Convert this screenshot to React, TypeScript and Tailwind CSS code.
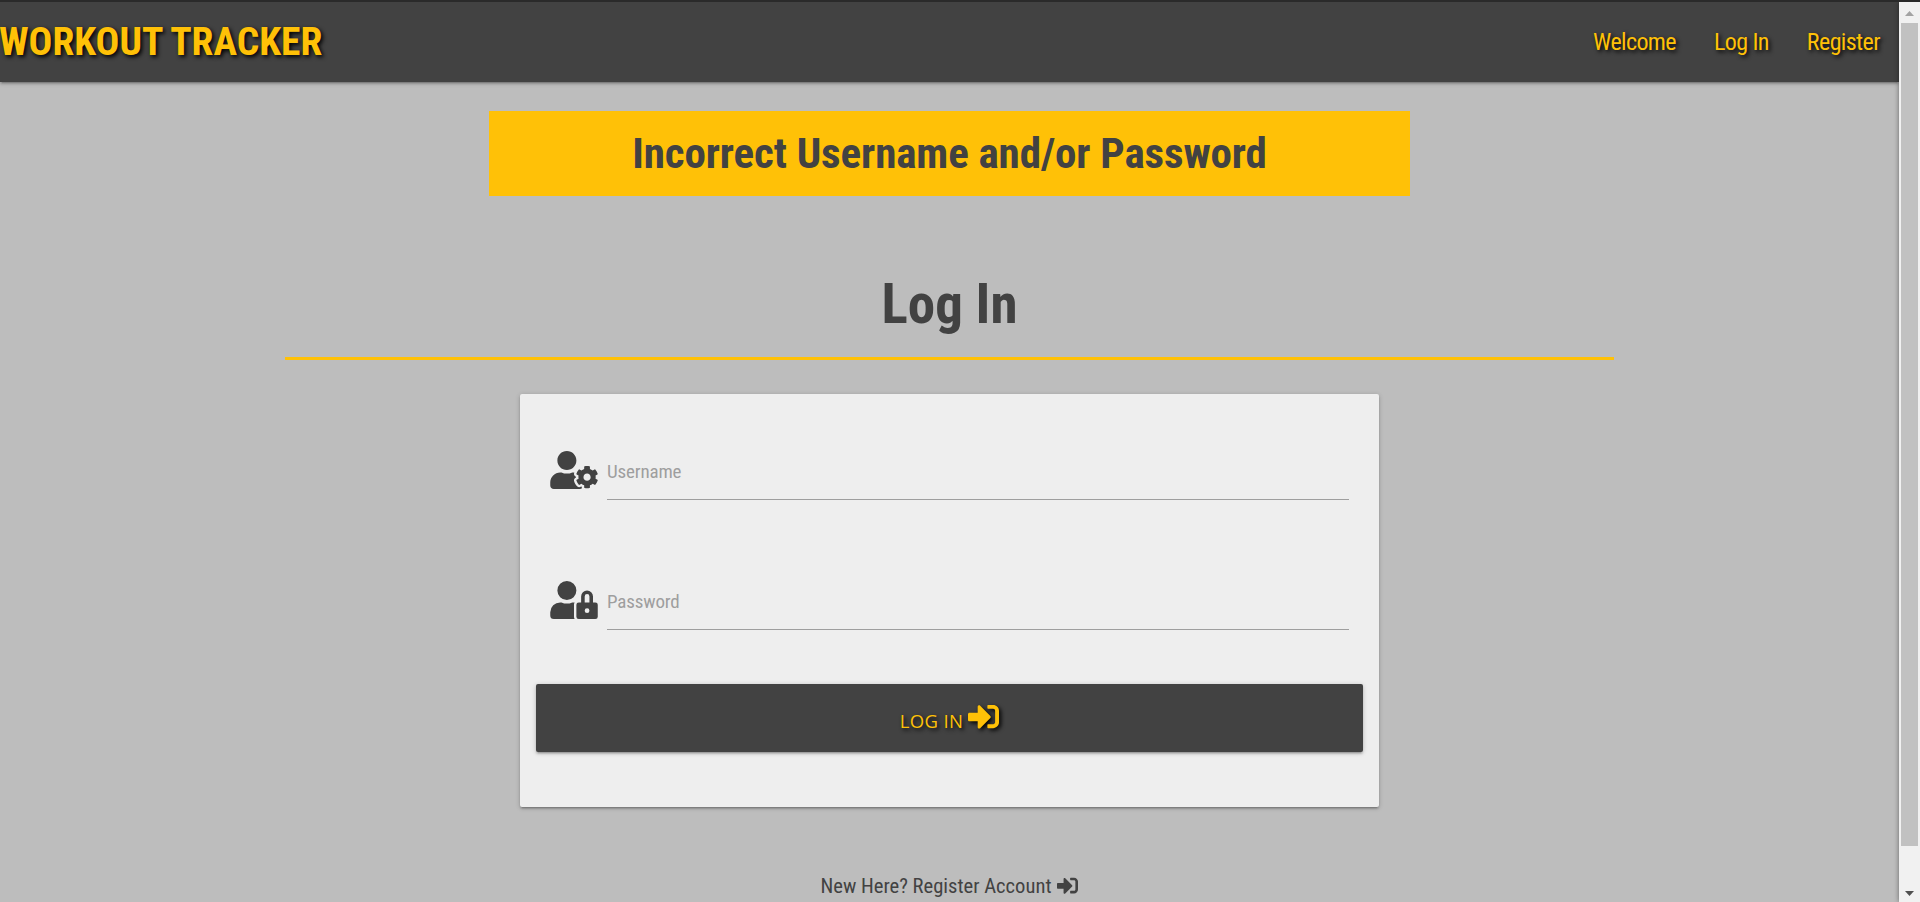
import type { ReactNode } from "react";
import { FaSignInAlt, FaUserCog, FaUserLock } from "react-icons/fa";

const navItems = ["Welcome", "Log In", "Register"];

function Header() {
  return (
    <nav className="relative flex h-20 items-center justify-between bg-[#424242] text-[#ffc107] shadow-[0_2px_2px_0_rgba(0,0,0,0.14),0_3px_1px_-2px_rgba(0,0,0,0.12),0_1px_5px_0_rgba(0,0,0,0.2)] [text-shadow:2px_2px_4px_#000]">
      <a href="#" className="-ml-px text-[39.5px] leading-none font-bold whitespace-nowrap">WORKOUT TRACKER</a>
      <ul className="flex text-2xl tracking-[-0.6px]">
        {navItems.map((item) => (
          <li key={item}>
            <a href="#" className="block pr-[19px] pl-[19px]">{item}</a>
          </li>
        ))}
      </ul>
    </nav>
  );
}

function Field({ icon, label, type }: { icon: ReactNode; label: string; type: string }) {
  return (
    <div className="flex h-[130px] items-start pl-[30px] pr-[30px]">
      <div className="mt-[9px] w-[57px] shrink-0 text-[#424242]">{icon}</div>
      <input
        type={type}
        placeholder={label}
        className="h-[58px] min-w-0 flex-1 border-b border-[#9e9e9e] bg-transparent pt-px text-[19px] tracking-[-0.15px] outline-none placeholder:text-[#9e9e9e]"
      />
    </div>
  );
}

function Scrollbar() {
  return (
    <div className="relative flex w-[21px] shrink-0 flex-col items-center bg-[#f1f1f1] shadow-[0_0_5px_rgba(0,0,0,0.45)]">
      <svg viewBox="0 0 9 5" className="mt-[9px] h-[5px] w-[9px]">
        <path d="M4.5 0 9 5H0z" fill="#a3a3a3" />
      </svg>
      <div className="mt-[7px] h-[823px] w-[17px] bg-[#c1c1c1]" />
      <svg viewBox="0 0 9 5" className="mt-[45px] h-[5px] w-[9px]">
        <path d="M0 0h9L4.500 5z" fill="#505050" />
      </svg>
    </div>
  );
}

export default function App() {
  return (
    <div className="flex h-[902px] flex-col overflow-hidden border-t-2 border-[#2a2a2a] bg-[#bdbdbd] font-['Roboto_Condensed','Roboto',sans-serif] text-[#424242] [font-stretch:75%]">
      <div className="flex min-h-0 flex-1">
        <div className="min-w-0 flex-1 overflow-hidden">
          <Header />
          <main className="flex flex-col items-center">
            <h4 className="mt-[29px] flex h-[85px] w-[921px] items-center justify-center bg-[#ffc107] text-[43px] leading-none font-bold tracking-[-0.1px]">
              Incorrect Username and/or Password
            </h4>
            <h3 className="mt-[75px] flex h-[89px] w-[1329px] justify-center border-b-3 border-[#ffc107] text-[55px] leading-[66px] font-bold">
              Log In
            </h3>
            <form className="mt-[34px] h-[413px] w-[859px] rounded-[2px] bg-[#eee] pt-[48px] shadow-[0_2px_2px_0_rgba(0,0,0,0.14),0_3px_1px_-2px_rgba(0,0,0,0.12),0_1px_5px_0_rgba(0,0,0,0.2)]">
              <Field label="Username" type="text" icon={<FaUserCog className="h-[38px] w-[48px]" />} />
              <Field label="Password" type="password" icon={<FaUserLock className="h-[38px] w-[48px]" />} />
              <button
                type="button"
                className="mx-4 mt-[-18px] flex h-[68px] w-[827px] items-center justify-center gap-[5px] rounded-[2px] bg-[#424242] font-['Open_Sans',sans-serif] text-[18.5px] tracking-[0.35px] text-[#ffc107] shadow-[0_2px_2px_0_rgba(0,0,0,0.14),0_3px_1px_-2px_rgba(0,0,0,0.12),0_1px_5px_0_rgba(0,0,0,0.2)] [font-stretch:100%] [text-shadow:2px_2px_4px_#000]"
              >
                <span className="mt-[6px]">LOG IN</span>
                <FaSignInAlt className="mt-[-3px] size-[31px] drop-shadow-[2px_2px_2px_#000]" />
              </button>
            </form>
            <a href="#" className="mt-[64px] flex items-center gap-[6px] text-[20.6px] leading-[30px]">
              New Here? Register Account
              <FaSignInAlt className="mt-[-1px] size-[21px]" />
            </a>
          </main>
        </div>
        <Scrollbar />
      </div>
    </div>
  );
}
